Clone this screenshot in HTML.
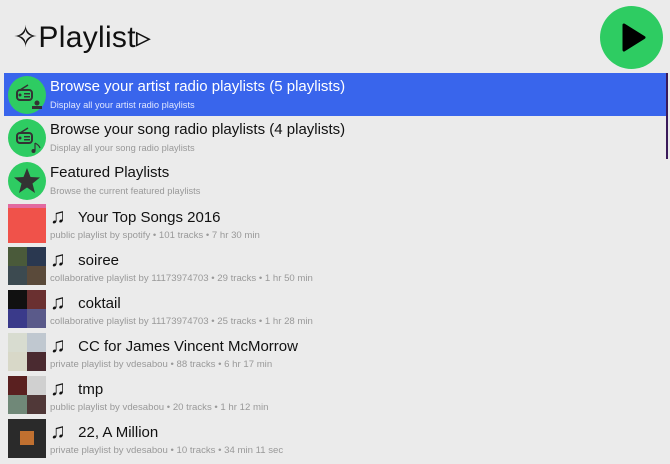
<!DOCTYPE html>
<html><head><style>
body{margin:0;width:670px;height:464px;background:#ebebeb;font-family:"Liberation Sans",sans-serif;overflow:hidden;position:relative}
.h{position:absolute;left:13px;top:20px;font-size:30px;color:#111;letter-spacing:0.3px}
.play{position:absolute;left:600px;top:6px;width:63px;height:63px;border-radius:50%;background:#2ecc62}
.row{position:absolute;left:4px;width:662px;height:43px}
.sel{background:#3965ec;color:#fff}
.ic{position:absolute;left:4px;top:3px;width:38px;height:38px;border-radius:50%;background:#2ecc62}
.t{position:absolute;left:46px;top:5px;font-size:15px;color:#111;white-space:nowrap}
.s{position:absolute;left:46px;top:27px;font-size:9.3px;color:#999;white-space:nowrap}
.sel .t{color:#fff}.sel .s{color:#dfe6ff}
.pl .t{top:3px;font-size:15px}
.pl .t b{font-weight:normal;font-size:21px;display:inline-block;width:24px;vertical-align:-1px}
.pl .s{font-size:9.6px;top:28px}
.th{position:absolute;left:4px;top:2px;width:38px;height:39px}
.th div{position:absolute;width:19px;height:19px}
.bar{position:absolute;left:666px;top:73px;width:2px;height:86px;background:#3a1a5a}
</style></head><body>
<div class="h">✧Playlist▹</div>
<div class="play"><svg width="63" height="63"><path d="M24 19 L44 31.5 L24 44 Z" fill="#000" stroke="#000" stroke-width="3" stroke-linejoin="round"/></svg></div>
<div class="bar"></div>

<div class="row sel" style="top:73px"><div class="ic"><svg width="38" height="38"><rect x="9" y="14" width="15" height="10" rx="3" fill="none" stroke="#333" stroke-width="2"/><rect x="16" y="17" width="6" height="1.5" fill="#333"/><rect x="16" y="20" width="6" height="1.5" fill="#333"/><circle cx="12" cy="19" r="1.5" fill="#333"/><line x1="12" y1="14" x2="20" y2="9" stroke="#333" stroke-width="1.5"/><circle cx="29" cy="27" r="2.5" fill="#333"/><rect x="24" y="30" width="10" height="3" fill="#333"/></svg></div><div class="t">Browse your artist radio playlists (5 playlists)</div><div class="s">Display all your artist radio playlists</div></div>

<div class="row" style="top:116px"><div class="ic"><svg width="38" height="38"><rect x="9" y="14" width="15" height="10" rx="3" fill="none" stroke="#333" stroke-width="2"/><rect x="16" y="17" width="6" height="1.5" fill="#333"/><rect x="16" y="20" width="6" height="1.5" fill="#333"/><circle cx="12" cy="19" r="1.5" fill="#333"/><line x1="12" y1="14" x2="20" y2="9" stroke="#333" stroke-width="1.5"/><path d="M27 24 V32 M27 24 Q31 26 32 29" stroke="#333" fill="none" stroke-width="1.2"/><circle cx="25.5" cy="32" r="2" fill="#333"/></svg></div><div class="t">Browse your song radio playlists (4 playlists)</div><div class="s">Display all your song radio playlists</div></div>

<div class="row" style="top:159px"><div class="ic"><svg width="38" height="38"><path d="M19 6 L22.5 15 L32 15.5 L24.5 21.5 L27 31 L19 25.5 L11 31 L13.5 21.5 L6 15.5 L15.5 15 Z" fill="#333"/></svg></div><div class="t">Featured Playlists</div><div class="s">Browse the current featured playlists</div></div>

<div class="row pl" style="top:202px"><div class="th" style="background:#f0524a"><div style="left:0;top:0;width:38px;height:4px;background:#e26aa0"></div></div><div class="t"><b>♫</b> Your Top Songs 2016</div><div class="s">public playlist by spotify • 101 tracks • 7 hr 30 min</div></div>
<div class="row pl" style="top:245px"><div class="th"><div style="left:0;top:0;background:#4a5a3a"></div><div style="left:19px;top:0;background:#2a3850"></div><div style="left:0;top:19px;background:#3c4a50"></div><div style="left:19px;top:19px;background:#5a4a3a"></div></div><div class="t"><b>♫</b> soiree</div><div class="s">collaborative playlist by 11173974703 • 29 tracks • 1 hr 50 min</div></div>
<div class="row pl" style="top:288px"><div class="th"><div style="left:0;top:0;background:#111"></div><div style="left:19px;top:0;background:#6a3030"></div><div style="left:0;top:19px;background:#3a3a8a"></div><div style="left:19px;top:19px;background:#5a5a8a"></div></div><div class="t"><b>♫</b> coktail</div><div class="s">collaborative playlist by 11173974703 • 25 tracks • 1 hr 28 min</div></div>
<div class="row pl" style="top:331px"><div class="th"><div style="left:0;top:0;background:#d8dcd0"></div><div style="left:19px;top:0;background:#c0c8d0"></div><div style="left:0;top:19px;background:#d8d8c8"></div><div style="left:19px;top:19px;background:#4a2a30"></div></div><div class="t"><b>♫</b> CC for James Vincent McMorrow</div><div class="s">private playlist by vdesabou • 88 tracks • 6 hr 17 min</div></div>
<div class="row pl" style="top:374px"><div class="th"><div style="left:0;top:0;background:#5a2020"></div><div style="left:19px;top:0;background:#d0d0d0"></div><div style="left:0;top:19px;background:#708878"></div><div style="left:19px;top:19px;background:#503838"></div></div><div class="t"><b>♫</b> tmp</div><div class="s">public playlist by vdesabou • 20 tracks • 1 hr 12 min</div></div>
<div class="row pl" style="top:417px"><div class="th" style="background:#2a2a2a"><div style="left:12px;top:12px;width:14px;height:14px;background:#c07030"></div></div><div class="t"><b>♫</b> 22, A Million</div><div class="s">private playlist by vdesabou • 10 tracks • 34 min 11 sec</div></div>
</body></html>
